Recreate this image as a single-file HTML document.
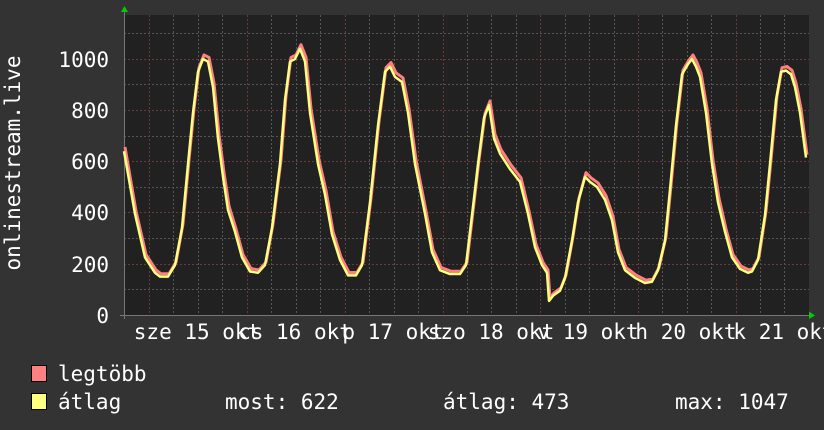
<!DOCTYPE html>
<html><head><meta charset="utf-8"><style>
body{margin:0;width:824px;height:430px;background:#333;overflow:hidden}
svg{display:block}
text{font-family:"DejaVu Sans Mono","Liberation Mono",monospace;fill:#fff;font-size:21px}
</style></head><body>
<svg width="824" height="430" xmlns="http://www.w3.org/2000/svg">
<rect x="124" y="15" width="685" height="300" fill="#212121"/>
<g stroke="#555" stroke-dasharray="2,2" stroke-width="1">
<path d="M124 33.5H809M124 84.5H809M124 136.5H809M124 187.5H809M124 238.5H809M124 289.5H809"/>
<path d="M124.5 15V315M173.5 15V315M198.5 15V315M222.5 15V315M271.5 15V315M296.5 15V315M320.5 15V315M369.5 15V315M394.5 15V315M418.5 15V315M467.5 15V315M491.5 15V315M516.5 15V315M565.5 15V315M589.5 15V315M614.5 15V315M662.5 15V315M687.5 15V315M711.5 15V315M760.5 15V315M784.5 15V315"/>
</g>
<g stroke="#6a3a3a" stroke-dasharray="2,2" stroke-width="1">
<path d="M124 59.5H809M124 110.5H809M124 161.5H809M124 212.5H809M124 264.5H809"/>
<path d="M149.5 15V315M247.5 15V315M345.5 15V315M443.5 15V315M540.5 15V315M638.5 15V315M736.5 15V315"/>
</g>
<path d="M120 315.5H812M124.5 12V319" stroke="#777" stroke-width="1"/>
<path d="M121 12L124.5 6L128 12Z" fill="#0c0"/>
<path d="M809 311.5L815 315.5L809 319Z" fill="#0c0"/>
<g transform="translate(0,315) scale(1,-0.256)" fill="none" stroke-linejoin="round">
<polyline transform="translate(1,6)" stroke="#ff7f7f" stroke-width="3" vector-effect="non-scaling-stroke" points="124,650 135,400 145,230 155,170 160,155 168,155 175,200 182,350 188,600 193,800 198,960 203,1010 208,1000 213,900 218,700 223,550 228,420 235,330 242,230 250,175 258,170 265,200 272,350 280,600 285,850 290,1000 295,1010 300,1050 305,1000 310,800 318,600 325,480 332,320 340,220 348,160 356,160 362,200 370,450 378,750 385,960 390,980 395,940 402,920 408,800 415,600 425,400 432,250 440,180 450,165 460,165 466,200 472,400 478,600 484,780 489,830 494,700 500,640 510,580 520,530 528,400 535,270 542,200 547,170 549,60 553,80 560,100 565,150 572,300 578,450 585,550 590,530 597,510 605,460 612,380 618,250 625,180 635,150 645,130 652,135 658,180 665,300 670,500 676,750 682,950 688,990 692,1010 696,980 700,940 706,800 712,600 718,450 725,330 732,230 740,185 748,170 752,175 758,220 765,400 770,600 776,850 781,960 786,965 791,950 795,900 800,800 806,620"/>
<polyline stroke="#ffff80" stroke-width="2.5" vector-effect="non-scaling-stroke" points="124,640 135,395 145,225 155,165 160,150 168,150 175,195 182,340 188,590 193,790 198,950 203,1000 208,990 213,890 218,690 223,540 228,410 235,325 242,225 250,170 258,165 265,195 272,340 280,590 285,840 290,990 295,1000 300,1040 305,990 310,790 318,590 325,470 332,315 340,215 348,155 356,155 362,195 370,440 378,740 385,950 390,970 395,930 402,910 408,790 415,590 425,395 432,245 440,175 450,160 460,160 466,195 472,390 478,590 484,770 489,820 494,690 500,630 510,570 520,520 528,395 535,265 542,195 547,165 549,55 553,75 560,95 565,145 572,290 578,440 585,540 590,520 597,500 605,450 612,370 618,245 625,175 635,145 645,125 652,130 658,175 665,290 670,490 676,740 682,940 688,980 692,1000 696,970 700,930 706,790 712,590 718,440 725,325 732,225 740,180 748,165 752,170 758,215 765,390 770,590 776,840 781,950 786,955 791,940 795,890 800,790 806,615"/>
</g>
<g text-anchor="end">
<text x="109" y="67">1000</text>
<text x="109" y="118">800</text>
<text x="109" y="169">600</text>
<text x="109" y="220">400</text>
<text x="109" y="272">200</text>
<text x="109" y="323">0</text>
</g>
<text transform="translate(20,163) rotate(-90)" text-anchor="middle">onlinestream.live</text>
<g text-anchor="middle">
<text x="197" y="339">sze 15 okt</text>
<text x="295" y="339">cs 16 okt</text>
<text x="393" y="339">p 17 okt</text>
<text x="491" y="339">szo 18 okt</text>
<text x="588" y="339">v 19 okt</text>
<text x="686" y="339">h 20 okt</text>
<text x="784" y="339">k 21 okt</text>
</g>
<rect x="31.5" y="365.5" width="15" height="16" fill="#ff8080" stroke="#000"/>
<rect x="31.5" y="393.5" width="15" height="16" fill="#ffff80" stroke="#000"/>
<text x="58" y="381">legtöbb</text>
<text x="58" y="409">átlag</text>
<text x="225" y="409">most: 622</text>
<text x="443" y="409">átlag: 473</text>
<text x="675" y="409">max: 1047</text>
</svg>
</body></html>
